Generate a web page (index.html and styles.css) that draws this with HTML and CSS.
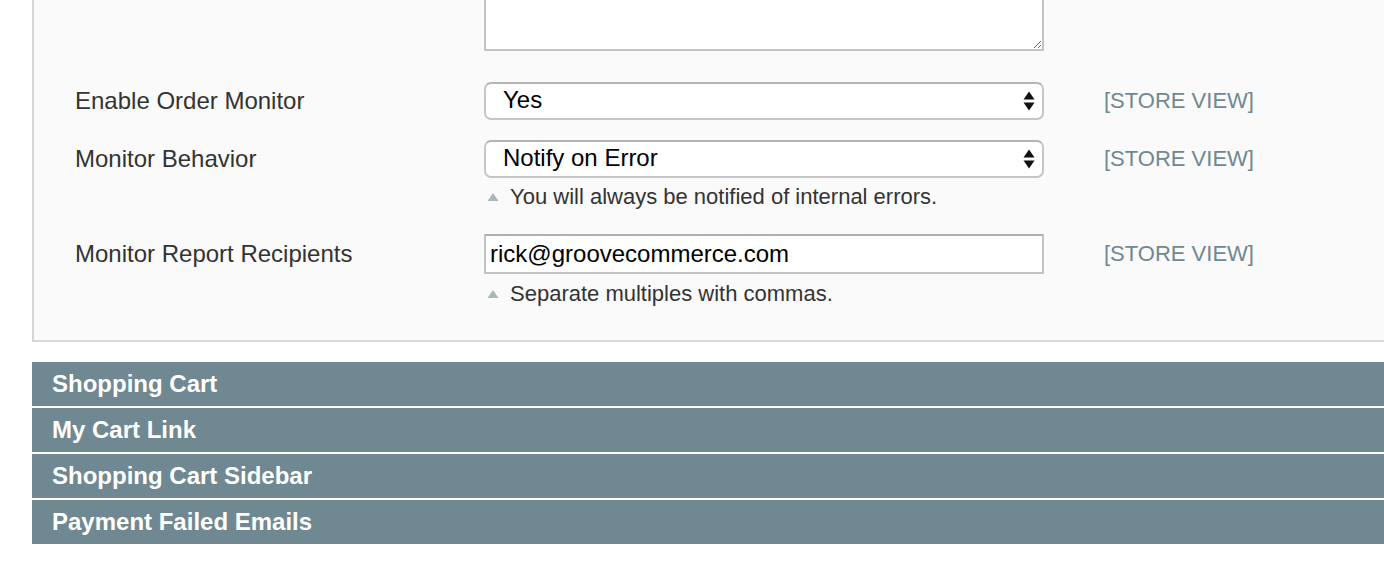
FILE: index.html
```html
<!DOCTYPE html>
<html>
<head>
<meta charset="utf-8">
<link rel="stylesheet" href="styles.css">
</head>
<body>
<div class="page">
  <div class="panel">
    <div class="row row-textarea">
      <div class="label"></div>
      <div class="control"><textarea class="textarea"></textarea></div>
      <div class="scope"></div>
    </div>
    <div class="row row-select1">
      <div class="label">Enable Order Monitor</div>
      <div class="control">
        <div class="select-wrap">
          <select class="select"><option>Yes</option><option>No</option></select>
          <svg class="arrows" width="12" height="22" viewBox="0 0 12 22"><path d="M6 1.5 L11.5 9.5 L0.5 9.5 Z" fill="#111"/><path d="M0.5 12.5 L11.5 12.5 L6 20.5 Z" fill="#111"/></svg>
        </div>
      </div>
      <div class="scope">[STORE VIEW]</div>
    </div>
    <div class="row row-select2">
      <div class="label">Monitor Behavior</div>
      <div class="control">
        <div class="select-wrap">
          <select class="select"><option>Notify on Error</option></select>
          <svg class="arrows" width="12" height="22" viewBox="0 0 12 22"><path d="M6 1.5 L11.5 9.5 L0.5 9.5 Z" fill="#111"/><path d="M0.5 12.5 L11.5 12.5 L6 20.5 Z" fill="#111"/></svg>
        </div>
        <div class="hint"><svg class="tri" width="12" height="10" viewBox="0 0 12 10"><path d="M6 1 L11.5 9 L0.5 9 Z" fill="#a9b7bb"/></svg>You will always be notified of internal errors.</div>
      </div>
      <div class="scope">[STORE VIEW]</div>
    </div>
    <div class="row row-input">
      <div class="label">Monitor Report Recipients</div>
      <div class="control">
        <input class="input" type="text" value="rick@groovecommerce.com">
        <div class="hint hint-input"><svg class="tri" width="12" height="10" viewBox="0 0 12 10"><path d="M6 1 L11.5 9 L0.5 9 Z" fill="#a9b7bb"/></svg>Separate multiples with commas.</div>
      </div>
      <div class="scope">[STORE VIEW]</div>
    </div>
  </div>
  <div class="sections">
    <div class="section-head">Shopping Cart</div>
    <div class="section-head">My Cart Link</div>
    <div class="section-head">Shopping Cart Sidebar</div>
    <div class="section-head">Payment Failed Emails</div>
  </div>
</div>
</body>
</html>
```
FILE: styles.css
```css
html, body {
  margin: 0;
  padding: 0;
  background: #ffffff;
  overflow: hidden;
}
body {
  font-family: "Liberation Sans", Arial, Helvetica, sans-serif;
  color: #333333;
}
.page {
  padding-left: 32px;
}
.panel {
  margin-top: -80px;
  background: #fafafa;
  border-left: 2px solid #d6d6d6;
  border-bottom: 2px solid #d6d6d6;
  padding: 0 0 33px 41px;
}
.row {
  display: grid;
  grid-template-columns: 349px 560px auto;
  column-gap: 60px;
  align-items: start;
}
.label {
  font-size: 24px;
  line-height: 38px;
  color: #333333;
}
.scope {
  font-size: 22px;
  line-height: 38px;
  color: #6f8891;
}
.row-select1 { margin-top: 31px; }
.row-select2 { margin-top: 20px; }
.row-input { margin-top: 24px; }
.row-input .label, .row-input .scope { line-height: 40px; }

.textarea {
  display: block;
  box-sizing: border-box;
  width: 560px;
  height: 131px;
  margin: 0;
  border: 2px solid #c3c3c3;
  background: #ffffff;
  resize: both;
  font-family: inherit;
}
.select-wrap {
  position: relative;
  width: 560px;
  height: 38px;
}
.select {
  -webkit-appearance: none;
  appearance: none;
  box-sizing: border-box;
  width: 560px;
  height: 38px;
  margin: 0;
  border: 2px solid #c6c6c6;
  border-top-color: #b3b3b3;
  border-radius: 7px;
  background: #ffffff;
  padding: 0 0 3px 17px;
  font-family: "Liberation Sans", Arial, Helvetica, sans-serif;
  font-size: 24px;
  color: #000000;
  outline: none;
}
.arrows {
  position: absolute;
  right: 9px;
  top: 8px;
  pointer-events: none;
}
.input {
  display: block;
  box-sizing: border-box;
  width: 560px;
  height: 40px;
  margin: 0;
  border: 2px solid #c3c3c3;
  border-top-color: #b0b0b0;
  background: #ffffff;
  padding: 0 0 0 4px;
  font-family: "Liberation Sans", Arial, Helvetica, sans-serif;
  font-size: 24px;
  color: #000000;
  outline: none;
}
.hint {
  display: flex;
  align-items: center;
  margin-top: 6px;
  font-size: 22px;
  line-height: 26px;
  color: #333333;
}
.hint-input { margin-top: 7px; }
.tri {
  margin: 0 11px 0 3px;
  flex: none;
}
.sections {
  margin-top: 20px;
  display: flex;
  flex-direction: column;
  gap: 2px;
}
.section-head {
  height: 44px;
  line-height: 44px;
  background: #6f8891;
  color: #ffffff;
  font-weight: bold;
  font-size: 24px;
  padding-left: 20px;
}
```
